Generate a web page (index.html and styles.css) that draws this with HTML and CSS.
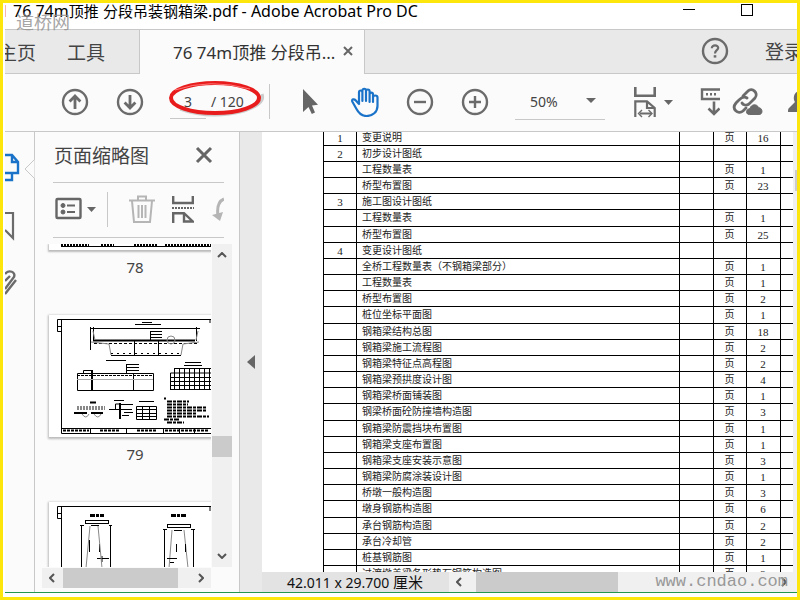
FILE: index.html
```
<!DOCTYPE html>
<html lang="zh-CN">
<head>
<meta charset="utf-8">
<title>76 74m顶推 分段吊装钢箱梁.pdf - Adobe Acrobat Pro DC</title>
<link rel="stylesheet" href="styles.css">
</head>
<body>
<div class="window">
  <header class="titlebar">
    <span class="app-mark"></span>
    <h1>76 74m<span class="han">顶推</span> <span class="han">分段吊装钢箱梁</span>.pdf - Adobe Acrobat Pro DC</h1>
    <button class="win-btn" aria-label="最小化"><svg width="12" height="12"><path d="M0 5.5H12" stroke="#000"/></svg></button>
    <button class="win-btn" aria-label="最大化"><svg width="12" height="12"><rect x=".5" y=".5" width="11" height="11" fill="none" stroke="#000"/></svg></button>
    <span class="stamp">道桥网</span>
  </header>

  <nav class="tabs">
    <a href="#home" class="tab tab-home">主页</a>
    <a href="#tools" class="tab tab-tools">工具</a>
    <div class="tab tab-doc"><a href="#doc">76 74m顶推 分段吊...</a>
      <button aria-label="关闭标签"><svg width="10" height="10"><path d="M1 1L9 9M9 1L1 9" stroke="#666" stroke-width="2"/></svg></button>
    </div>
    <div class="tab-rest">
      <button aria-label="帮助"><svg width="28" height="28" fill="none" stroke="#6b6b6b"><circle cx="14" cy="14" r="12" stroke-width="2.4"/><path d="M10.8 11.2C10.8 7.2 17.4 7.6 17.2 11C17 13.2 14 13.2 14 16.4" stroke-width="2.2"/><path d="M14 18.2V20.6" stroke-width="2.6"/></svg></button>
      <a href="#login" class="login">登录</a>
    </div>
  </nav>

  <div class="toolbar" role="toolbar">
    <button class="t-up" aria-label="上一页"><svg width="28" height="28" fill="none" stroke="#6b6b6b" stroke-width="2.4"><circle cx="14" cy="14" r="12"/><path d="M14 21V8M8.6 13.4L14 8L19.4 13.4" stroke-width="2.8"/></svg></button>
    <button class="t-down" aria-label="下一页"><svg width="28" height="28" fill="none" stroke="#6b6b6b" stroke-width="2.4"><circle cx="14" cy="14" r="12"/><path d="M14 7V20M8.6 14.6L14 20L19.4 14.6" stroke-width="2.8"/></svg></button>
    <div class="pager">
      <input type="text" value="3" aria-label="页码"><span>/ 120</span>
      <svg class="ring" width="104" height="46" fill="none"><path d="M12 30Q42 41 76 32Q98 25 94 15" stroke="#888" stroke-opacity=".4" stroke-width="3"/><ellipse cx="47" cy="19" rx="44" ry="15" stroke="#e81c1c" stroke-width="4"/><path d="M7 11Q42 -1 82 10" stroke="#f77" stroke-width="1"/></svg>
    </div>
    <span class="divider"></span>
    <button class="t-select" aria-label="选择"><svg width="18" height="28"><path d="M2 1V24L7.5 19L10.8 26L14 24.6L11 17.6L17 16.8Z" fill="#666"/></svg></button>
    <button class="t-hand" aria-label="手形工具"><svg width="30" height="30" fill="none" stroke="#1a73c8" stroke-width="2.2" stroke-linecap="round" stroke-linejoin="round"><path d="M9 17V5.5C9 2.8 12.4 2.8 12.4 5.5V14V4C12.4 1 16 1 16 4V14V4.500C16 1.800 19.600 1.800 19.600 4.500V15V7.500C19.600 5 23 5 23 7.500V15V10.500C23 7.800 27.500 7.800 27.500 10.500V19C27.500 25 22.600 29 16.500 29C11 29 8.600 26 6.500 22L2.400 14.800C1.200 12 4.200 11.600 5.800 13.400L9 17"/></svg></button>
    <button class="t-minus" aria-label="缩小"><svg width="28" height="28" fill="none" stroke="#6b6b6b" stroke-width="2.4"><circle cx="14" cy="14" r="12"/><path d="M8 14H20"/></svg></button>
    <button class="t-plus" aria-label="放大"><svg width="28" height="28" fill="none" stroke="#6b6b6b" stroke-width="2.4"><circle cx="14" cy="14" r="12"/><path d="M8 14H20M14 8V20"/></svg></button>
    <button class="zoom-box"><span>50%</span><svg width="10" height="6"><path d="M0 0H10L5 5Z" fill="#666"/></svg></button>
    <button class="t-fit" aria-label="适合宽度"><svg width="40" height="32" fill="none" stroke="#6b6b6b" stroke-width="2.6"><path d="M2.3 1V9.7H21.7V1"/><path d="M2.3 31V15.3H14L21.7 22V31M14 15.3V22H21.7M7 27.5H18" stroke-width="2.2"/><path d="M9 24L5.5 27.5L9 31M15.5 24L19 27.5L15.5 31" stroke-width="1.4"/><path d="M31 14H40L35.5 19Z" fill="#666" stroke="none"/></svg></button>
    <button class="t-scroll" aria-label="滚动"><svg width="20" height="30" fill="none" stroke="#6b6b6b" stroke-width="2.4"><path d="M20 2.5H2V12H20"/><path d="M6 7.2H18" stroke-dasharray="2 2"/><path d="M14 14.500V27M8.5 21.5L14 27L19.5 21.5" stroke-width="2.6"/></svg></button>
    <button class="t-link" aria-label="共享链接"><svg width="32" height="30" fill="none" stroke="#6b6b6b" stroke-width="2.8" stroke-linecap="round"><path d="M11 9L16 4C20 0 27 6 23 11L17 17C14 19 11 18 10 16"/><path d="M15 11C12 9 9 11 7 13L4 16C-1 22 6 28 11 24L14 21"/><path d="M17 27.5C13.5 27.5 13.500 22 18 21.5C19 17 25 16.5 26.5 20.5C31 21 31 27.5 27.500 27.500Z" fill="#6b6b6b" stroke-width="1"/></svg></button>
    <button class="t-user" aria-label="用户"><svg width="12" height="24"><path d="M12 1C6 2 6 10 8 12L2 18C1 19 1 20 1 22H12Z" fill="#6b6b6b"/></svg></button>
  </div>

  <main class="workspace">
    <aside class="rail">
      <button aria-label="页面缩略图"><svg width="15" height="30" fill="none" stroke="#1a73c8" stroke-width="2.4"><path d="M0 2H7L13 9V20H0M7 2V9H13M7 20V27H0"/></svg></button>
      <button aria-label="书签"><svg width="15" height="30" fill="none" stroke="#6b6b6b" stroke-width="2.2"><path d="M0 2H8V27L0 19"/></svg></button>
      <button aria-label="附件"><svg width="15" height="28" fill="none" stroke="#6b6b6b" stroke-width="2.4"><path d="M0 5C4 0 11 3 9 8L0 20M0 12L5 7M11 11L0 25"/></svg></button>
      <svg class="pointer" width="11" height="20"><path d="M10.5 0V.5L1 10L10.5 19.5V20" fill="#fbfbfb" stroke="#c8c8c8"/></svg>
    </aside>
    <section class="panel">
      <div class="panel-head"><h2>页面缩略图</h2><button aria-label="关闭面板"><svg width="18" height="18"><path d="M2 2L16 16M16 2L2 16" stroke="#666" stroke-width="3"/></svg></button></div>
      <div class="panel-tools">
        <button aria-label="选项"><svg width="42" height="24" fill="none" stroke="#666" stroke-width="2.4"><rect x="1.5" y="2" width="24" height="19" rx="1"/><path d="M12 8.5H20M12 15H20" stroke-width="2"/><circle cx="8" cy="8.5" r="2" fill="#666" stroke-width="1"/><circle cx="8" cy="15" r="2" fill="#666" stroke-width="1"/><path d="M32 10H41L36.5 15Z" fill="#666" stroke="none"/></svg></button>
        <span class="divider"></span>
        <button class="p-trash" aria-label="删除"><svg width="26" height="28" fill="none" stroke="#b5b5b5" stroke-width="2"><path d="M0 5.500H26M9 5V1.500H17V5M3 6L5 27H21L23 6M9.500 10V23M13 10V23M16.500 10V23"/></svg></button>
        <button class="p-split" aria-label="插入页面"><svg width="22" height="28" fill="none" stroke="#666" stroke-width="2.4"><path d="M1.200 1V8H20.800V1M1.200 28V18.200H12L20.800 26.500H12V18"/><path d="M0 13H22" stroke-width="2" stroke-dasharray="2 1"/></svg></button>
        <button class="p-rotate" aria-label="旋转"><svg width="12" height="26"><path d="M12 3C5 6 5 13 6 20" fill="none" stroke="#b5b5b5" stroke-width="3"/><path d="M0 19L11 16L8 25Z" fill="#b5b5b5"/></svg></button>
      </div>
      <div class="thumbs">
        <div class="thumb-list">
          <figure class="first"><svg width="163" height="6" fill="none" stroke="#000"><path d="M12 2.500H163"/><path d="M12 1H40M52 1H65M85 1H108M116 1H163" stroke-width="2" stroke-dasharray="2 1"/></svg><figcaption>78</figcaption></figure>
          <figure><svg width="163" height="122" fill="none" stroke="#000">
            <path d="M163 4.500H8.500V16.500H12.500M12.500 4V118.500H163M12.500 113.500H163M8.500 11.500H12.500M161 4V8"/>
            <path d="M41 13.500H151M41.500 12V35M44.500 12V25M147.500 12V26M86 9.500H112M93 7.500H103"/>
            <path d="M44 25.500H146" stroke-width="2"/><path d="M45 28.500H150" stroke-dasharray="3 2"/>
            <path d="M42 27L60 29L62 40M132 40L134 29L150 27M46 25L44 16M147 25L149 16" stroke="#888"/>
            <path d="M62 40.500H132M85.500 26V40M109.500 26V40"/><path d="M62 38.500H132" stroke-dasharray="2 4"/>
            <path d="M101 16.500H113M101 19.500H113M101 22.500H113M101.500 16V25"/><circle cx="122" cy="25" r="4" stroke="#888"/>
            <path d="M57 45.500H77M78 49.500H90M78 52.500H90M78 55.500H90M77.500 49V58"/>
            <path d="M28.500 58.500H104.500V75.500H28.500ZM34.500 58V55.500H43M84.500 58V75"/><path d="M28 60.500H104" stroke-dasharray="3 1"/><path d="M43 55V75" stroke-width="2"/><path d="M28 64.500H104" stroke="#aaa"/>
            <path d="M121.500 58H163M121.500 62.500H163M121.500 66.500H163M121.500 70.500H163M121.500 74.500H163M125 53.500H163M121.500 58V75M125.500 53V75M130.500 53V75M135.500 53V75M140.500 53V75M145.500 53V75M150.500 53V75M155.500 53V75M160.500 53V75M135 50.500H153M136 47.500H152"/>
            <path d="M28 93H56" stroke-width="4" stroke-dasharray="2 1" stroke="#888"/><path d="M25 98H38M42 98H54M41 87.500H47" stroke-width="2"/><path d="M33 99Q37 105 40 99M45 99Q49 105 52 99" stroke="#888"/>
            <path d="M65 85.500H75M60 94.500H83M66.500 94V89H71M72 89.500H84M75 97.500H84M73 100.500H80"/><path d="M71 88V104" stroke-width="2"/>
            <path d="M90 86.500H105M87.500 91.500H107.500V104.500H87.500ZM87 94.500H107M87 98.500H107M87 101.500H107M93.500 91V104M100.500 91V104"/>
            <path d="M115 83.500H117M118 86.500H140M118 89.500H139M118 92.500H157M118 95.500H158M118 98.500H147M118 101.500H160M115 104.500H130M118 107.500H135" stroke-width="2" stroke-dasharray="5 1 3 1"/>
            <path d="M14 115.500H40M51 115.500H70M88 115.500H107M116 115.500H160" stroke-width="2" stroke-dasharray="3 1"/><path d="M41.500 113V118M77.500 113V118M114.500 113V118M130.500 113V118M145.500 113V118"/>
          </svg><figcaption>79</figcaption></figure>
          <figure><svg width="163" height="122" fill="none" stroke="#000">
            <path d="M163 4.500H8.500V16.500H12.500V122M12.500 4.500V17M8.500 11.500H12.500M161 4V9"/>
            <path d="M41 13.500H55M122 13.500H137" stroke-width="3" stroke-dasharray="5 1 3 1"/>
            <path d="M36 18.500H59M36 21.500H59M36.500 18V22M59.500 18V22M42 23.500H50M31 23.500H35M60 23.500H63M32.500 23V122M61.500 23V122M40.500 38V50M50.500 42V50M48 56.500H60M53 54V60"/>
            <path d="M41 24L37 66M49 24L53 66M123 28L120 66M135 28L139 66" stroke="#888"/>
            <path d="M118 22.500H141M118 25.500H141M118.500 22V26M141.500 22V26M125 28.500H133M114 27.500H118M142 27.500H146M115.500 27V122M144.500 27V122M127.500 42V50M136.500 42V50M118 56.500H128M121 60.500H125"/>
          </svg></figure>
        </div>
        <div class="vscroll"><svg width="10" height="6"><path d="M1 5L5 1L9 5" fill="none" stroke="#555" stroke-width="2"/></svg><i></i><svg width="10" height="6"><path d="M1 1L5 5L9 1" fill="none" stroke="#555" stroke-width="2"/></svg></div>
      </div>
      <div class="hscroll panel-scroll"><svg width="6" height="10"><path d="M5 1L1 5L5 9" fill="none" stroke="#555" stroke-width="2"/></svg><i></i><svg width="6" height="10"><path d="M1 1L5 5L1 9" fill="none" stroke="#555" stroke-width="2"/></svg></div>
    </section>
    <button class="splitter" aria-label="折叠面板"><svg width="8" height="14"><path d="M8 0V14L0 7Z" fill="#666"/></svg></button>
    <section class="document">
      <div class="page-row">
        <div class="page">
          <table>
            <colgroup><col class="c-no"><col><col class="c-gap"><col class="c-unit"><col class="c-count"><col class="c-end"></colgroup>
            <tbody>
            <tr><td>1</td><td>变更说明</td><td></td><td>页</td><td>16</td><td></td></tr>
            <tr><td>2</td><td>初步设计图纸</td><td></td><td></td><td></td><td></td></tr>
            <tr><td></td><td>工程数量表</td><td></td><td>页</td><td>1</td><td></td></tr>
            <tr><td></td><td>桥型布置图</td><td></td><td>页</td><td>23</td><td></td></tr>
            <tr><td>3</td><td>施工图设计图纸</td><td></td><td></td><td></td><td></td></tr>
            <tr><td></td><td>工程数量表</td><td></td><td>页</td><td>1</td><td></td></tr>
            <tr><td></td><td>桥型布置图</td><td></td><td>页</td><td>25</td><td></td></tr>
            <tr><td>4</td><td>变更设计图纸</td><td></td><td></td><td></td><td></td></tr>
            <tr><td></td><td>全桥工程数量表（不钢箱梁部分）</td><td></td><td>页</td><td>1</td><td></td></tr>
            <tr><td></td><td>工程数量表</td><td></td><td>页</td><td>1</td><td></td></tr>
            <tr><td></td><td>桥型布置图</td><td></td><td>页</td><td>2</td><td></td></tr>
            <tr><td></td><td>桩位坐标平面图</td><td></td><td>页</td><td>1</td><td></td></tr>
            <tr><td></td><td>钢箱梁结构总图</td><td></td><td>页</td><td>18</td><td></td></tr>
            <tr><td></td><td>钢箱梁施工流程图</td><td></td><td>页</td><td>2</td><td></td></tr>
            <tr><td></td><td>钢箱梁特征点高程图</td><td></td><td>页</td><td>2</td><td></td></tr>
            <tr><td></td><td>钢箱梁预拱度设计图</td><td></td><td>页</td><td>4</td><td></td></tr>
            <tr><td></td><td>钢箱梁桥面铺装图</td><td></td><td>页</td><td>1</td><td></td></tr>
            <tr><td></td><td>钢梁桥面砼防撞墙构造图</td><td></td><td>页</td><td>3</td><td></td></tr>
            <tr><td></td><td>钢箱梁防震挡块布置图</td><td></td><td>页</td><td>1</td><td></td></tr>
            <tr><td></td><td>钢箱梁支座布置图</td><td></td><td>页</td><td>1</td><td></td></tr>
            <tr><td></td><td>钢箱梁支座安装示意图</td><td></td><td>页</td><td>3</td><td></td></tr>
            <tr><td></td><td>钢箱梁防腐涂装设计图</td><td></td><td>页</td><td>1</td><td></td></tr>
            <tr><td></td><td>桥墩一般构造图</td><td></td><td>页</td><td>3</td><td></td></tr>
            <tr><td></td><td>墩身钢筋构造图</td><td></td><td>页</td><td>6</td><td></td></tr>
            <tr><td></td><td>承台钢筋构造图</td><td></td><td>页</td><td>2</td><td></td></tr>
            <tr><td></td><td>承台冷却管</td><td></td><td>页</td><td>2</td><td></td></tr>
            <tr><td></td><td>桩基钢筋图</td><td></td><td>页</td><td>1</td><td></td></tr>
            <tr><td></td><td>过渡墩盖梁各形垫石钢筋构造图</td><td></td><td>页</td><td>2</td><td></td></tr>
            </tbody>
          </table>
        </div>
        <div class="page-scroll"><i></i></div>
      </div>
      <div class="status">
        <span class="size">42.011 x 29.700 <span class="han">厘米</span></span>
        <div class="hscroll doc-scroll"><svg width="6" height="10"><path d="M5 1L1 5L5 9" fill="none" stroke="#555" stroke-width="2"/></svg><i></i><svg width="6" height="10"><path d="M1 1L5 5L1 9" fill="none" stroke="#555" stroke-width="2"/></svg></div>
        <span class="site">www.cndao.com</span>
      </div>
    </section>
  </main>
</div>
</body>
</html>
```
FILE: styles.css
```
* { box-sizing: border-box; }
html, body { height: 100%; }
body {
  margin: 0;
  font-family: "Noto Sans", "Noto Sans CJK SC", sans-serif;
  color: #444;
}
h1, h2, figure { margin: 0; font-weight: 400; }
button { display: flex; align-items: center; flex: none; padding: 0; border: 0; background: none; font: inherit; color: inherit; }
a { color: inherit; text-decoration: none; }
svg { display: block; flex: none; }
.han { font-size: 15px; }

.window {
  display: flex;
  flex-direction: column;
  height: 100vh;
  overflow: hidden;
  border: 3px solid #fde60c;
  padding: 0 0 4px 2px;
  background: #fff;
}

.titlebar {
  position: relative;
  display: flex;
  flex: none;
  align-items: flex-start;
  height: 27px;
  padding-right: 44px;
  border-bottom: 1px solid #c8c8c8;
}
.titlebar h1 { flex: 1; margin-left: 7px; font-size: 16px; line-height: 16px; color: #000; white-space: nowrap; }
.app-mark { width: 1px; height: 12px; margin-top: 2px; background: #f5b5ae; }
.win-btn { margin-top: 1px; }
.win-btn + .win-btn { margin-left: 46px; }
.stamp { position: absolute; left: 11px; top: 8px; font-family: "Noto Sans CJK SC", sans-serif; font-size: 18px; line-height: 20px; color: #909090; opacity: 0.8; }

.tabs { display: flex; flex: none; height: 44px; background: #e9e9e9; font-size: 19px; white-space: nowrap; }
.tab { display: flex; flex: none; align-items: center; border-bottom: 1px solid #c8c8c8; }
.tab-home { width: 31px; justify-content: flex-end; overflow: hidden; }
.tab-tools { width: 104px; padding-left: 31px; border-right: 1px solid #c8c8c8; }
.tab-doc { width: 225px; padding: 0 11px 2px 33px; justify-content: space-between; background: #fbfbfb; border-right: 1px solid #c8c8c8; border-bottom: 0; font-size: 17px; color: #333; }
.tab-rest { display: flex; flex: 1; align-items: center; justify-content: flex-end; min-width: 0; gap: 36px; overflow: hidden; padding-bottom: 1px; border-bottom: 1px solid #c8c8c8; }
.login { width: 32px; overflow: hidden; }

.toolbar {
  display: flex;
  flex: none;
  align-items: center;
  height: 58px;
  padding-bottom: 2px;
  border-bottom: 1px solid #c8c8c8;
  background: #fbfbfb;
}
.divider { flex: none; width: 1px; height: 35px; background: #c8c8c8; }
.t-up { margin-left: 56px; }
.t-down { margin-left: 27px; }
.pager { position: relative; display: flex; align-items: center; width: 99px; margin-left: 26px; font-size: 14px; }
.pager input { width: 36px; height: 35px; padding: 0 0 0 14px; border: 0; border-bottom: 1px solid #c8c8c8; background: none; font: inherit; color: inherit; }
.pager span { margin-left: 5px; }
.ring { position: absolute; left: -2px; top: -5px; }
.t-select { margin-left: 31px; }
.t-hand { margin-left: 31px; }
.t-minus { margin-left: 26px; }
.t-plus { margin-left: 27px; }
.zoom-box { justify-content: space-between; width: 90px; height: 36px; margin-left: 26px; padding: 0 9px 0 15px; border-bottom: 1px solid #c8c8c8; font-size: 14px; }
.t-fit { margin-left: 28px; }
.t-scroll { margin-left: 27px; }
.t-link { margin-left: 12px; }
.t-user { flex: 1; overflow: hidden; margin-left: 23px; }

.workspace { display: flex; flex: 1; min-height: 0; border-bottom: 1px solid #239551; background: #fbfbfb; }
.rail { position: relative; display: flex; flex: none; flex-direction: column; gap: 28px; width: 30px; padding-top: 21px; border-right: 1px solid #c8c8c8; }
.pointer { position: absolute; right: -1px; top: 27px; }

.panel { display: flex; flex: none; flex-direction: column; width: 205px; border-right: 1px solid #c8c8c8; }
.panel-head { display: flex; flex: none; align-items: center; justify-content: space-between; height: 51px; margin: 0 15px 0 18px; padding: 0 11px 4px 1px; border-bottom: 1px solid #c8c8c8; }
.panel-head h2 { font-size: 19px; }
.panel-tools { display: flex; flex: none; align-items: center; height: 55px; margin: 0 15px 0 18px; padding: 0 0 2px 2px; border-bottom: 1px solid #c8c8c8; overflow: hidden; }
.panel-tools .divider { margin-left: 10px; }
.p-trash { margin-left: 21px; }
.p-split { margin-left: 17px; }
.p-rotate { margin-left: 18px; }
.thumbs { display: flex; flex: 1; min-height: 0; margin: 6px 7px 0 7px; }
.thumb-list { flex: 1; min-width: 0; padding-left: 7px; overflow: hidden; }
.thumb-list figure { height: 187px; }
.thumb-list figure > svg { background: #fff; box-shadow: 0 1px 2px 1px #bbb; }
.thumb-list .first { height: 71px; }
.thumb-list figcaption { width: 172px; padding-top: 6px; font-size: 15px; line-height: 22px; text-align: center; }
.vscroll { display: flex; flex: none; flex-direction: column; align-items: center; width: 20px; margin-left: 1px; padding: 8px 0; background: #f0f0f0; }
.vscroll i { width: 20px; height: 21px; margin: auto 0 96px; background: #cbcbcb; }
.hscroll { display: flex; flex: none; align-items: center; height: 20px; background: #f0f0f0; }
.hscroll i { height: 20px; background: #cbcbcb; }
.hscroll svg:last-child { margin-left: auto; }
.panel-scroll { margin: 1px 28px 4px 7px; padding: 0 7px; }
.panel-scroll i { width: 115px; margin-left: 8px; }

.splitter { align-items: center; justify-content: center; width: 22px; background: #e9e9e9; }

.document { display: flex; flex: 1; flex-direction: column; min-width: 0; background: #fff; }
.page-row { display: flex; flex: 1; min-height: 0; }
.page { flex: 1; min-width: 0; padding-left: 61px; overflow: hidden; }
.page table { width: 100%; margin-top: -3px; border-collapse: collapse; table-layout: fixed; font-family: "Liberation Serif", "Noto Sans CJK SC", serif; color: #222; }
.page td { height: 16px; padding: 0; border: 1px solid #000; border-right: 0; font-size: 11px; line-height: 14px; text-align: center; white-space: nowrap; overflow: hidden; }
.page tr:nth-child(6n) td { height: 17px; }
.page td:nth-child(2) { padding-left: 5px; font-size: 10px; text-align: left; }
.page td:nth-child(4) { font-size: 10px; }
.c-no { width: 33px; }
.c-gap { width: 34px; }
.c-unit { width: 33px; }
.c-count { width: 34px; }
.c-end { width: 13px; }
.page-scroll { flex: none; width: 4px; padding-top: 38px; background: #f0f0f0; }
.page-scroll i { display: block; width: 2px; height: 21px; margin-left: auto; background: #cbcbcb; }
.status { position: relative; display: flex; flex: none; height: 20px; background: #e3e3e3; }
.size { flex: none; width: 187px; padding-left: 25px; font-size: 14px; line-height: 20px; color: #111; white-space: nowrap; }
.doc-scroll { flex: 1; padding: 0 10px 0 7px; }
.doc-scroll i { width: 142px; margin-left: 14px; }
.site { position: absolute; right: 9px; top: -4px; font-family: "Liberation Mono", monospace; font-size: 17px; line-height: 28px; color: #999; }
```
